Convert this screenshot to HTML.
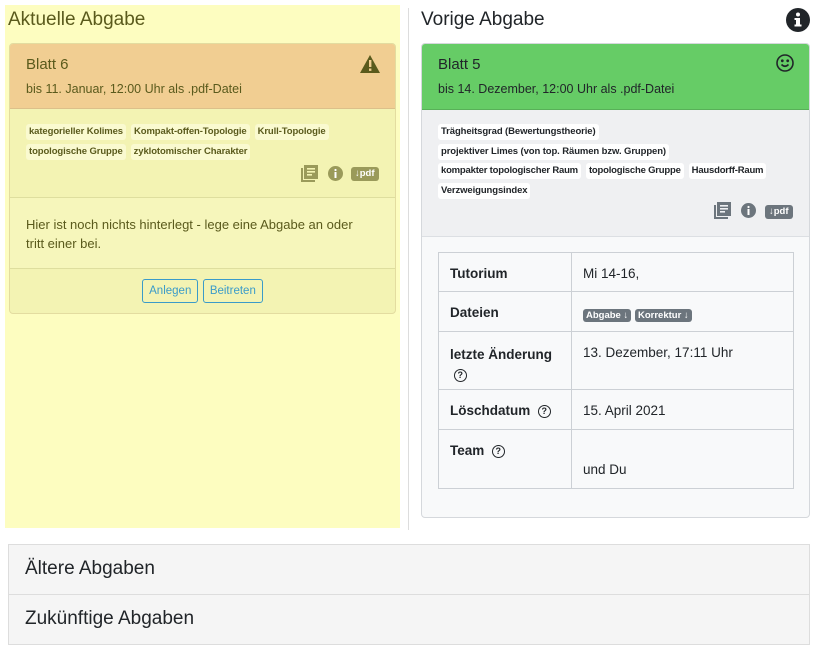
<!DOCTYPE html>
<html><head><meta charset="utf-8"><style>
*{box-sizing:border-box;margin:0;padding:0}
body{width:818px;height:653px;background:#fff;font-family:"Liberation Sans",sans-serif;color:#212529;position:relative;overflow:hidden}
.abs{position:absolute}
.tags{line-height:19.5px;font-size:0}
.tag{display:inline-block;font-size:9.5px;font-weight:bold;padding:2px 3px;border-radius:3px;margin:0 5px 0 0;line-height:12px;letter-spacing:-0.1px;vertical-align:top}
.ltag{background:#fafad0;color:#5a5a1c}
.rtag{background:#fff;color:#212529}
h2{font-weight:normal;font-size:19px}
.btn{display:inline-block;border:1px solid #3a9bc9;color:#3a9bc9;border-radius:3px;font-size:11.5px;padding:5px 6px}
.badge{background:#6c757d;color:#fff;font-size:9.5px;font-weight:bold;border-radius:3px;padding:1px 3px}
.acc{position:absolute;left:8px;width:802px;height:51px;background:#f5f5f5;border:1px solid #ddd;font-size:19px;padding:13px 16px;color:#212529}
.row{position:absolute;left:0;width:354px;border-bottom:1px solid #ccd0d5;font-size:13.5px}
.row b{position:absolute;left:11px;top:13px}
.row span.v{position:absolute;left:144px;top:13px}
.q{display:inline-block;width:13px;height:13px;border:1.5px solid #212529;border-radius:50%;font-size:9px;text-align:center;line-height:10px;font-weight:bold;vertical-align:1px}
</style></head><body>
<div class="abs" style="left:5px;top:5px;width:395px;height:523px;background:#fdfdc0"></div>
<h2 class="abs" style="left:8px;top:9px;color:#5a5a1c">Aktuelle Abgabe</h2>
<div class="abs" style="left:9px;top:43px;width:387px;height:271px;border:1px solid #e3dca0;border-radius:4px;background:#f3f3b3;overflow:hidden">
 <div style="height:65px;background:#f1ce92;border-bottom:1px solid #dcc08a;padding:12px 16px;color:#5a5a1c;position:relative">
  <div style="font-size:15px">Blatt 6</div>
  <div style="font-size:12.5px;margin-top:9px">bis 11. Januar, 12:00 Uhr als .pdf-Datei</div>
  <svg class="abs" style="left:350px;top:11px" width="20" height="18" viewBox="0 0 20 18"><path d="M10 0L20 18H0Z" fill="#5a5a1c"/><rect x="9" y="5" width="2.4" height="7" fill="#f1ce92"/><rect x="9" y="13.5" width="2.4" height="2.4" fill="#f1ce92"/></svg>
 </div>
 <div class="tags" style="height:89px;padding:15px 16px;border-bottom:1px solid #dede9e;position:relative">
  <span class="tag ltag">kategorieller Kolimes</span><span class="tag ltag">Kompakt-offen-Topologie</span><span class="tag ltag">Krull-Topologie</span><br><span class="tag ltag">topologische Gruppe</span><span class="tag ltag">zyklotomischer Charakter</span>
  <svg class="abs" style="left:291px;top:56px" width="17" height="17" viewBox="0 0 17 17" fill="#9a9a5a"><rect x="3" y="0" width="14" height="14"/><path d="M0 3h2v12h12v2H0z"/><rect x="6" y="3" width="8" height="1.6" fill="#f3f3b3"/><rect x="6" y="6" width="8" height="1.6" fill="#f3f3b3"/><rect x="6" y="9" width="5" height="1.6" fill="#f3f3b3"/></svg>
  <svg class="abs" style="left:318px;top:57px" width="15" height="15" viewBox="0 0 15 15"><circle cx="7.5" cy="7.5" r="7.5" fill="#9a9a5a"/><rect x="6.5" y="6" width="2" height="6" fill="#fff"/><circle cx="7.5" cy="4" r="1.1" fill="#fff"/></svg>
  <span class="abs" style="left:341px;top:58px;background:#9a9a5a;color:#fff;font-size:9.5px;font-weight:bold;border-radius:3px;padding:1px 4px;line-height:12px">↓pdf</span>
 </div>
 <div style="height:71px;padding:17px 30px 0 16px;font-size:13px;line-height:19px;color:#5a5a1c;border-bottom:1px solid #dede9e;background:#f6f6bb">Hier ist noch nichts hinterlegt - lege eine Abgabe an oder tritt einer bei.</div>
 <div style="text-align:center;padding-top:10px"><span class="btn">Anlegen</span> <span class="btn">Beitreten</span></div>
</div>
<div class="abs" style="left:408px;top:8px;width:1px;height:522px;background:#ddd"></div>
<h2 class="abs" style="left:421px;top:9px">Vorige Abgabe</h2>
<svg class="abs" style="left:786px;top:8px" width="24" height="24" viewBox="0 0 24 24"><circle cx="12" cy="12" r="12" fill="#212529"/><rect x="10" y="10" width="4" height="8" fill="#fff"/><rect x="8.5" y="16.5" width="7" height="2" fill="#fff"/><rect x="8.5" y="10" width="3" height="2" fill="#fff"/><circle cx="12" cy="6.5" r="2" fill="#fff"/></svg>
<div class="abs" style="left:421px;top:43px;width:389px;height:475px;border:1px solid #d5d8dc;border-radius:4px;background:#f8f9fa;overflow:hidden">
 <div style="height:66px;background:#66cc66;border-bottom:1px solid #58b058;padding:12px 16px;position:relative">
  <div style="font-size:15px">Blatt 5</div>
  <div style="font-size:12.5px;margin-top:9px">bis 14. Dezember, 12:00 Uhr als .pdf-Datei</div>
  <svg class="abs" style="left:354px;top:10px" width="18" height="18" viewBox="0 0 18 18" fill="none" stroke="#212529" stroke-width="1.6"><circle cx="9" cy="9" r="8"/><path d="M5.5 10.5q3.5 3.5 7 0"/><circle cx="6.3" cy="6.8" r=".6" fill="#212529"/><circle cx="11.7" cy="6.8" r=".6" fill="#212529"/></svg>
 </div>
 <div class="tags" style="height:127px;background:#eff0f2;border-bottom:1px solid #dcdfe3;padding:14px 16px 0 16px;position:relative">
  <span class="tag rtag">Trägheitsgrad (Bewertungstheorie)</span><br><span class="tag rtag">projektiver Limes (von top. Räumen bzw. Gruppen)</span><br><span class="tag rtag" style="letter-spacing:-0.2px">kompakter topologischer Raum</span><span class="tag rtag" style="letter-spacing:-0.2px">topologische Gruppe</span><span class="tag rtag" style="letter-spacing:-0.2px;margin-right:0">Hausdorff-Raum</span><br><span class="tag rtag">Verzweigungsindex</span>
  <svg class="abs" style="left:292px;top:92px" width="17" height="17" viewBox="0 0 17 17" fill="#6c757d"><rect x="3" y="0" width="14" height="14"/><path d="M0 3h2v12h12v2H0z"/><rect x="6" y="3" width="8" height="1.6" fill="#eff0f2"/><rect x="6" y="6" width="8" height="1.6" fill="#eff0f2"/><rect x="6" y="9" width="5" height="1.6" fill="#eff0f2"/></svg>
  <svg class="abs" style="left:319px;top:93px" width="15" height="15" viewBox="0 0 15 15"><circle cx="7.5" cy="7.5" r="7.5" fill="#6c757d"/><rect x="6.5" y="6" width="2" height="6" fill="#fff"/><circle cx="7.5" cy="4" r="1.1" fill="#fff"/></svg>
  <span class="abs badge" style="left:343px;top:95px;padding:1px 4px;line-height:12px">↓pdf</span>
 </div>
 <div class="abs" style="left:16px;top:208px;width:356px;height:237px;border:1px solid #ccd0d5">
  <div class="abs" style="left:132px;top:0;width:1px;height:235px;background:#ccd0d5"></div>
  <div class="row" style="top:0;height:39px"><b>Tutorium</b><span class="v">Mi 14-16,</span></div>
  <div class="row" style="top:39px;height:40px"><b>Dateien</b><span class="v" style="top:14px"><span class="badge">Abgabe ↓</span> <span class="badge">Korrektur ↓</span></span></div>
  <div class="row" style="top:79px;height:58px"><b style="line-height:20px">letzte Änderung<br>&nbsp;<span class="q">?</span></b><span class="v">13. Dezember, 17:11 Uhr</span></div>
  <div class="row" style="top:137px;height:40px"><b>Löschdatum &nbsp;<span class="q">?</span></b><span class="v">15. April 2021</span></div>
  <div class="row" style="top:177px;height:58px;border-bottom:none"><b>Team &nbsp;<span class="q">?</span></b><span class="v" style="top:32px">und Du</span></div>
 </div>
</div>
<div class="acc" style="top:544px">Ältere Abgaben</div>
<div class="acc" style="top:594px">Zukünftige Abgaben</div>
</body></html>
